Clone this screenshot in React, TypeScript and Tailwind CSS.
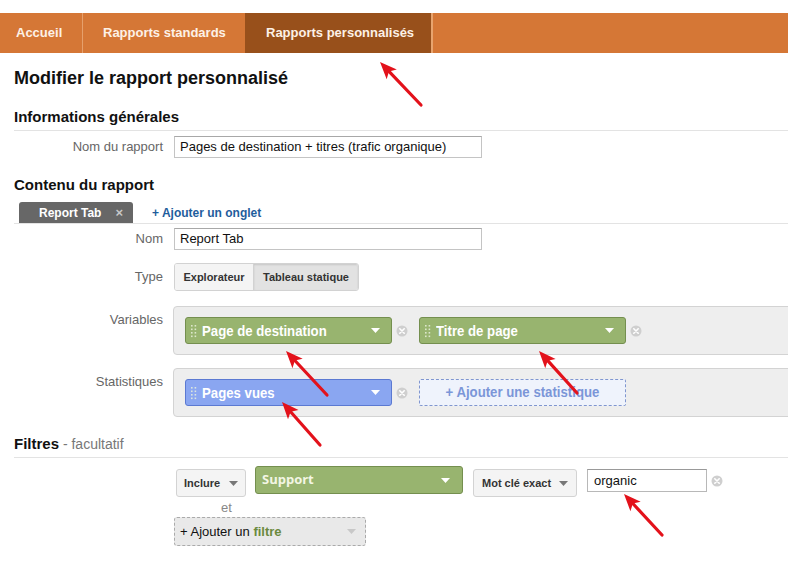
import React from "react";

const F = { fontFamily: '"Liberation Sans", Arial, sans-serif' };

function Arrow({ x1, y1, x2, y2 }: { x1: number; y1: number; x2: number; y2: number }) {
  const dx = x2 - x1;
  const dy = y2 - y1;
  const len = Math.sqrt(dx * dx + dy * dy);
  const ux = dx / len;
  const uy = dy / len;
  const hl = 17;
  const hw = 7;
  const bx = x2 - ux * hl;
  const by = y2 - uy * hl;
  const pts = `${x2},${y2} ${bx - uy * hw},${by + ux * hw} ${bx + ux * 4},${by + uy * 4} ${bx + uy * hw},${by - ux * hw}`;
  return (
    <g>
      <line x1={x1} y1={y1} x2={bx + ux * 4} y2={by + uy * 4} stroke="#e3121b" strokeWidth={3.2} strokeLinecap="round" />
      <polygon points={pts} fill="#e3121b" />
    </g>
  );
}

function RemoveIcon() {
  return (
    <svg width="12" height="12" viewBox="0 0 12 12" className="shrink-0">
      <circle cx="6" cy="6" r="5.5" fill="#cfcfcf" />
      <path d="M3.8 3.8 L8.2 8.2 M8.2 3.8 L3.8 8.2" stroke="#ffffff" strokeWidth="1.6" strokeLinecap="round" />
    </svg>
  );
}

function Grip() {
  return (
    <svg width="6" height="14" viewBox="0 0 6 14" className="shrink-0">
      {[1, 4.5, 8, 11.5].map((y) => (
        <g key={y}>
          <rect x="0" y={y} width="1.6" height="1.6" fill="#e8f0dc" opacity="0.85" />
          <rect x="3.6" y={y} width="1.6" height="1.6" fill="#e8f0dc" opacity="0.85" />
        </g>
      ))}
    </svg>
  );
}

function Caret({ color = "#ffffff" }: { color?: string }) {
  return (
    <svg width="9" height="5" viewBox="0 0 9 5" className="shrink-0">
      <path d="M0 0 L9 0 L4.5 5 Z" fill={color} />
    </svg>
  );
}

function Chip({ label, blue }: { label: string; blue?: boolean }) {
  return (
    <div
      className={
        "flex items-center h-[27px] w-[207px] rounded-[3px] border pl-[5px] pr-[11px] " +
        (blue ? "bg-[#8aa6f1] border-[#5b79d2]" : "bg-[#98b46f] border-[#748f4f]")
      }
    >
      <Grip />
      <div className="ml-[5px] flex-1 overflow-hidden">
        <span className="inline-block origin-left scale-x-[0.88] whitespace-nowrap text-[15px] font-bold text-white leading-none">
          {label}
        </span>
      </div>
      <Caret />
    </div>
  );
}

function Label({ children, top }: { children: React.ReactNode; top?: boolean }) {
  return (
    <div
      className={
        "w-[149px] mr-[11px] text-right text-[13px] text-[#666666] shrink-0 " + (top ? "pt-[4px]" : "")
      }
    >
      {children}
    </div>
  );
}

export default function App() {
  return (
    <div className="relative w-[788px] h-[566px] overflow-hidden bg-white text-[#111]" style={F}>
      <div className="h-[13px]" />
      <nav className="flex h-[40px] bg-[#d57736] text-[13px] font-bold text-[#fdf1e6]">
        <div className="flex items-center pl-[16px] w-[83px] border-r border-[#e6a06c]">Accueil</div>
        <div className="flex items-center pl-[20px] w-[162px]">Rapports standards</div>
        <div className="flex items-center pl-[21px] w-[188px] bg-[#98501b] border-r-2 border-[#e8a46e]">
          Rapports personnalisés
        </div>
        <div className="flex-1" />
      </nav>

      <div className="pl-[14px]">
        <h1 className="mt-[15px] text-[18px] leading-[20px] font-bold">Modifier le rapport personnalisé</h1>

        <h2 className="mt-[20px] text-[15px] leading-[18px] font-bold pb-[4px] border-b border-[#e3e3e3]">
          Informations générales
        </h2>
        <div className="mt-[5px] flex items-center">
          <Label>Nom du rapport</Label>
          <div className="w-[308px] h-[22px] border border-[#c4c4c4] border-t-[#a8a8a8] flex items-center px-[5px] text-[13px]">
            Pages de destination + titres (trafic organique)
          </div>
        </div>

        <h2 className="mt-[18px] text-[15px] leading-[18px] font-bold">Contenu du rapport</h2>
        <div className="mt-[8px] flex items-end h-[22px] border-b border-[#e3e3e3]">
          <div className="ml-[5px] h-[21px] w-[114px] bg-[#676767] rounded-t-[3px] flex items-center pl-[20px] text-[12px] font-bold text-white">
            <span>Report Tab</span>
            <span className="ml-[14px] text-[#c8c8c8] text-[13px]">×</span>
          </div>
          <div className="ml-[19px] h-[21px] flex items-center text-[12px] font-bold text-[#1f5d9c]">
            + Ajouter un onglet
          </div>
        </div>
        <div className="mt-[4px] flex items-center">
          <Label>Nom</Label>
          <div className="w-[308px] h-[22px] border border-[#c4c4c4] border-t-[#a8a8a8] flex items-center px-[5px] text-[13px]">
            Report Tab
          </div>
        </div>
        <div className="mt-[13px] flex items-center">
          <Label>Type</Label>
          <div className="flex h-[28px] rounded-[3px] border border-[#d2d2d2] overflow-hidden text-[11px] font-bold text-[#333]">
            <div className="flex items-center justify-center w-[79px] bg-[#f4f4f4] border-r border-[#d2d2d2]">Explorateur</div>
            <div className="flex items-center justify-center w-[104px] bg-[#e2e2e2] shadow-[inset_0_1px_2px_rgba(0,0,0,0.12)]">
              Tableau statique
            </div>
          </div>
        </div>

        <div className="mt-[15px] flex items-start">
          <Label top>Variables</Label>
          <div className="-ml-[1px] flex-1 mr-[-20px] h-[49px] bg-[#eeeeee] border border-[#d3d3d3] rounded-[4px] flex items-center pl-[11px]">
            <Chip label="Page de destination" />
            <div className="ml-[4px]"><RemoveIcon /></div>
            <div className="ml-[11px]"><Chip label="Titre de page" /></div>
            <div className="ml-[4px]"><RemoveIcon /></div>
          </div>
        </div>

        <div className="mt-[13px] flex items-start">
          <Label top>Statistiques</Label>
          <div className="-ml-[1px] flex-1 mr-[-20px] h-[49px] bg-[#eeeeee] border border-[#d3d3d3] rounded-[4px] flex items-center pl-[11px]">
            <Chip label="Pages vues" blue />
            <div className="ml-[4px]"><RemoveIcon /></div>
            <div className="ml-[11px] h-[27px] w-[207px] rounded-[2px] border border-dashed border-[#8096cf] bg-[#eff3fc] flex items-center justify-center">
              <span className="inline-block scale-x-[0.88] whitespace-nowrap text-[15px] font-bold text-[#7b96d8]">
                + Ajouter une statistique
              </span>
            </div>
          </div>
        </div>

        <h2 className="mt-[18px] text-[15px] leading-[18px] pb-[4px] border-b border-[#e3e3e3]">
          <span className="font-bold">Filtres</span>
          <span className="text-[#777] text-[14px]"> - facultatif</span>
        </h2>

        <div className="mt-[8px] ml-[162px] flex items-start">
          <div className="mt-[3px] h-[28px] w-[70px] rounded-[3px] border border-[#d3d3d3] bg-[#f4f4f4] flex items-center pl-[7px] text-[11px] font-bold text-[#333]">
            Inclure
            <span className="ml-[9px]"><Caret color="#777" /></span>
          </div>
          <div className="ml-[9px] h-[28px] w-[208px] rounded-[3px] border border-[#748f4f] bg-[#98b46f] flex items-center pl-[6px] pr-[12px]">
            <span className="flex-1 text-[13px] font-bold text-[#f3f6e4]" style={{ fontFamily: '"Open Sans", sans-serif' }}>
              Support
            </span>
            <Caret />
          </div>
          <div className="ml-[10px] mt-[3px] h-[28px] w-[104px] rounded-[3px] border border-[#d3d3d3] bg-[#f4f4f4] flex items-center pl-[8px] text-[11px] font-bold text-[#333]">
            Mot clé exact
            <span className="ml-[8px]"><Caret color="#777" /></span>
          </div>
          <div className="ml-[10px] mt-[3px] h-[23px] w-[120px] border border-[#b8b8b8] border-t-[#999] flex items-center px-[6px] text-[13px]">
            organic
          </div>
          <div className="ml-[4px] mt-[9px]"><RemoveIcon /></div>
        </div>
        <div className="ml-[207px] mt-[3px] h-[16px] text-[13px] text-[#888] leading-[16px]">et</div>
        <div className="ml-[160px] mt-[1px] h-[29px] w-[192px] rounded-[3px] border border-dashed border-[#aaaaaa] bg-[#e9e9e9] flex items-center pl-[5px] pr-[9px] text-[13px]">
          <span className="flex-1">
            + Ajouter un <span className="font-bold text-[#6b8a3e]">filtre</span>
          </span>
          <Caret color="#c8c8c8" />
        </div>
      </div>

      <svg className="absolute inset-0 pointer-events-none" width="788" height="566">
        <Arrow x1={421} y1={105} x2={380} y2={62} />
        <Arrow x1={327} y1={395} x2={286} y2={351} />
        <Arrow x1={577} y1={393} x2={539} y2={351} />
        <Arrow x1={320} y1={445} x2={282} y2={402} />
        <Arrow x1={662} y1={535} x2={624} y2={494} />
      </svg>
    </div>
  );
}
